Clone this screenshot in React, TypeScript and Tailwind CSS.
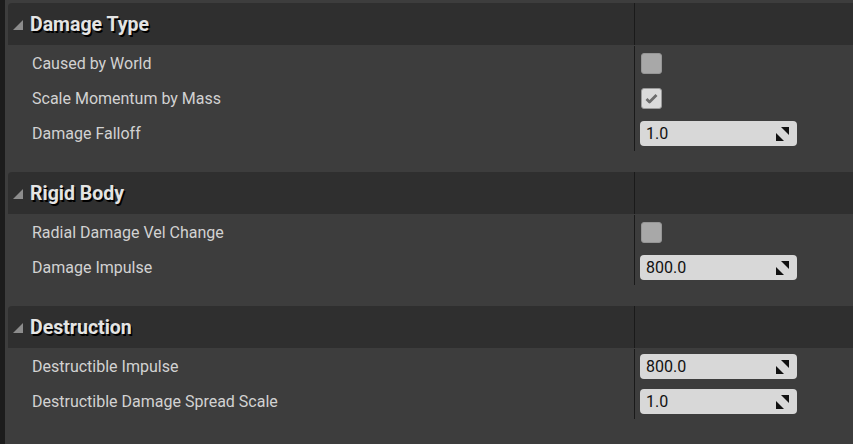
type Row =
  | { label: string; kind: "check"; checked: boolean }
  | { label: string; kind: "number"; value: string };

interface Section {
  title: string;
  rows: Row[];
}

const sections: Section[] = [
  {
    title: "Damage Type",
    rows: [
      { label: "Caused by World", kind: "check", checked: false },
      { label: "Scale Momentum by Mass", kind: "check", checked: true },
      { label: "Damage Falloff", kind: "number", value: "1.0" },
    ],
  },
  {
    title: "Rigid Body",
    rows: [
      { label: "Radial Damage Vel Change", kind: "check", checked: false },
      { label: "Damage Impulse", kind: "number", value: "800.0" },
    ],
  },
  {
    title: "Destruction",
    rows: [
      { label: "Destructible Impulse", kind: "number", value: "800.0" },
      { label: "Destructible Damage Spread Scale", kind: "number", value: "1.0" },
    ],
  },
];

function CheckBox({ checked }: { checked: boolean }) {
  return (
    <div
      className={
        checked
          ? "ml-[1px] w-[21px] h-[21px] rounded-[3px] bg-[#dadada] border border-[#9a9a9a] flex items-center justify-center"
          : "ml-[1px] w-[21px] h-[21px] rounded-[3px] bg-[#a8a8a8] border border-[#959595]"
      }
    >
      {checked && (
        <svg width="13" height="11" viewBox="0 0 13 11">
          <path d="M1.5 6 L4.5 9 L11.5 2" fill="none" stroke="#6c6c6c" strokeWidth="2.8" strokeLinejoin="round" />
        </svg>
      )}
    </div>
  );
}

function NumberBox({ value }: { value: string }) {
  return (
    <div className="w-[157px] h-[25px] rounded-[4px] bg-[#d8d8d8] flex items-center justify-between pl-[6px] pr-[8px]">
      <span className="text-[16px] text-[#111111] leading-none">{value}</span>
      <svg width="13" height="14" viewBox="0 0 13 14">
        <path d="M5 0 H13 V8 Z" fill="#111111" />
        <path d="M0 6 V14 H8 Z" fill="#111111" />
      </svg>
    </div>
  );
}

function Category({ section }: { section: Section }) {
  return (
    <div className="flex flex-col">
      <div className="ml-[3px] h-[42px] rounded-tl-[4px] bg-[#2f2f2f] flex">
        <div className="w-[626px] flex items-center pl-[5px] gap-[7px] pt-[1px]">
          <svg width="10" height="10" viewBox="0 0 10 10">
            <path d="M0 10 L10 10 L10 0 Z" fill="#8c8c8c" />
          </svg>
          <span className="text-[19.5px] font-bold text-[#e4e4e4] [text-shadow:1.5px_1.5px_0_#000]">
            {section.title}
          </span>
        </div>
        <div className="w-px bg-[#1a1a1a]" />
        <div className="flex-1" />
      </div>
      <div className="flex pt-[1px] pb-[16px]">
        <div className="w-[629px] flex flex-col">
          {section.rows.map((r) => (
            <div key={r.label} className="h-[35px] flex items-center pl-[27px] text-[16px] text-[#d2d2d2]">
              {r.label}
            </div>
          ))}
        </div>
        <div className="w-px bg-[#1a1a1a]" />
        <div className="flex-1 flex flex-col pl-[5px]">
          {section.rows.map((r) => (
            <div key={r.label} className="h-[35px] flex items-center">
              {r.kind === "check" ? <CheckBox checked={r.checked} /> : <NumberBox value={r.value} />}
            </div>
          ))}
        </div>
      </div>
    </div>
  );
}

export default function App() {
  return (
    <div className="w-[853px] h-[444px] overflow-hidden bg-[#3d3d3d] flex font-['Roboto',sans-serif]">
      <div className="w-[5px] bg-[#1c1c1c]" />
      <div className="flex-1 flex flex-col pt-[3px] gap-[5px]">
        {sections.map((s) => (
          <Category key={s.title} section={s} />
        ))}
      </div>
    </div>
  );
}
